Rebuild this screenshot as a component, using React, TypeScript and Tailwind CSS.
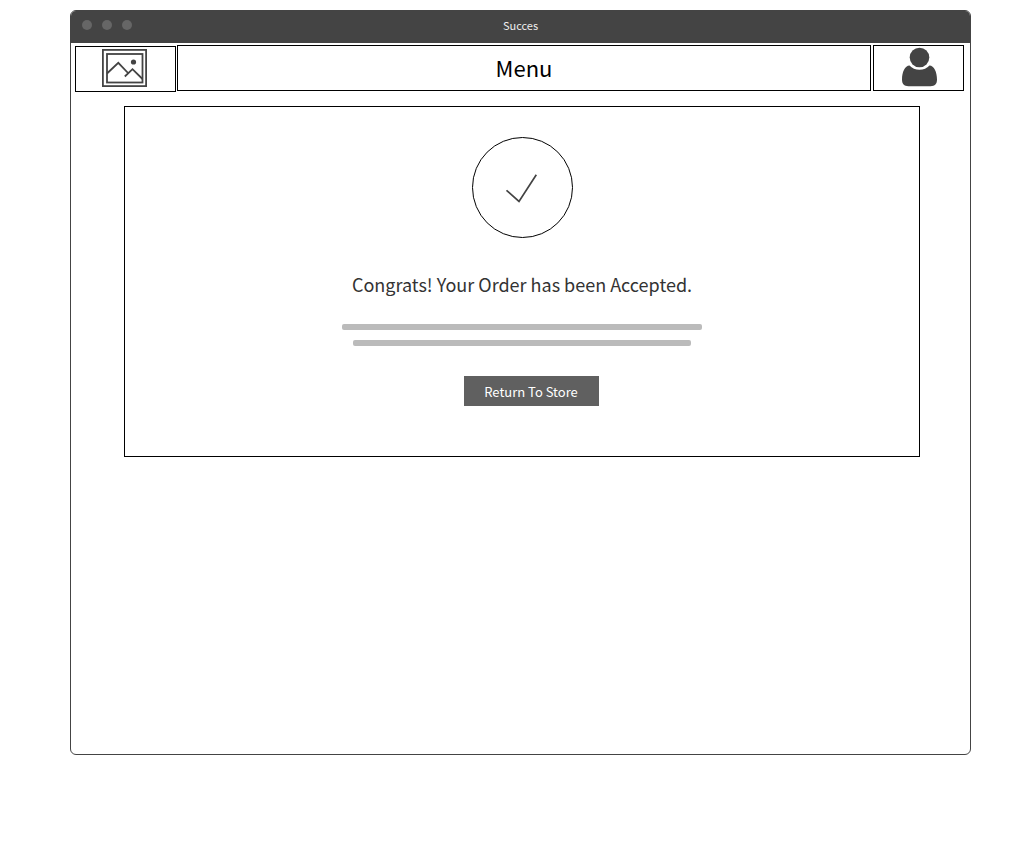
function ImageIcon() {
  return (
    <svg width="45" height="38" viewBox="0 0 45 38" fill="none" stroke="#444" strokeWidth="2" aria-hidden="true">
      <rect x="0.900" y="0.900" width="43.200" height="36.200" strokeWidth="1.800" />
      <rect x="5" y="5" width="35.500" height="28.500" strokeWidth="1.800" />
      <path d="M5 24.500 16.300 13.800 26.500 24.500M22.800 27.500 30.500 20.200 40.500 30" strokeWidth="1.800" />
      <circle cx="31.500" cy="13" r="2.600" fill="#444" stroke="none" />
    </svg>
  );
}

function UserIcon() {
  return (
    <svg width="36" height="40" viewBox="0 0 36 40" fill="#444" aria-hidden="true">
      <circle cx="18.500" cy="10.500" r="9.800" />
      <path d="M8.500 18.500C11 21.300 14.500 22.800 18.500 22.800S26 21.300 28.500 18.500C33 18.500 36 25 36 32.500C36 37 34 39.200 29.500 39.200H7.500C3 39.200 1 37 1 32.500C1 25 4 18.500 8.500 18.500Z" />
    </svg>
  );
}

function CheckIcon() {
  return (
    <svg width="32" height="30" viewBox="0 0 32 30" fill="none" stroke="#444" strokeWidth="1.700" aria-hidden="true">
      <path d="M.5 17.300 13 28.500 30.300 1.800" />
    </svg>
  );
}

export default function App() {
  return (
    <div className="min-h-screen bg-white pt-[10px] pr-[49px] pl-[70px] font-['Noto_Sans_CJK_SC','Noto_Sans',sans-serif] text-black">
      <div className="min-h-[745px] overflow-hidden rounded-md border border-[#444]">
        <div className="grid h-8 grid-cols-[1fr_auto_1fr] items-center bg-[#444] px-[11px] pb-1">
          <div className="flex gap-[10px]">
            <span className="size-[10px] rounded-full bg-[#666]" />
            <span className="size-[10px] rounded-full bg-[#666]" />
            <span className="size-[10px] rounded-full bg-[#666]" />
          </div>
          <h1 className="text-[11px] leading-4 text-[#eee]">Succes</h1>
        </div>

        <header className="flex pt-[2px] pr-[6px] pl-1">
          <a href="#home" aria-label="Home" className="mt-px mr-px flex h-[46px] w-[101px] items-center justify-center border border-black pr-[2px] pb-[2px]">
            <ImageIcon />
          </a>
          <nav className="mr-[2px] flex h-[46px] flex-1 items-center justify-center border border-black pb-[2px]">
            <a href="#menu" className="text-[22px] leading-8">Menu</a>
          </nav>
          <a href="#account" aria-label="Account" className="flex h-[46px] w-[91px] items-center justify-center border border-black pb-[2px] pl-px">
            <UserIcon />
          </a>
        </header>

        <main className="mt-[14px] mr-[50px] mb-12 ml-[53px] flex flex-col items-center border border-black pt-[30px] pb-[50px]">
          <div className="flex size-[101px] items-center justify-center rounded-full border border-black">
            <CheckIcon />
          </div>
          <h2 className="mt-[30px] text-[18px] leading-8 text-[#333]">Congrats! Your Order has been Accepted.</h2>
          <div className="mt-6 h-[6px] w-[360px] rounded-xs bg-[#bbb]" />
          <div className="mt-[10px] h-[6px] w-[338px] rounded-xs bg-[#bbb]" />
          <button type="button" className="mt-[30px] ml-[18px] h-[30px] w-[135px] bg-[#606060] pt-[2px] text-[13px] leading-5 text-white">
            Return To Store
          </button>
        </main>
      </div>
    </div>
  );
}
